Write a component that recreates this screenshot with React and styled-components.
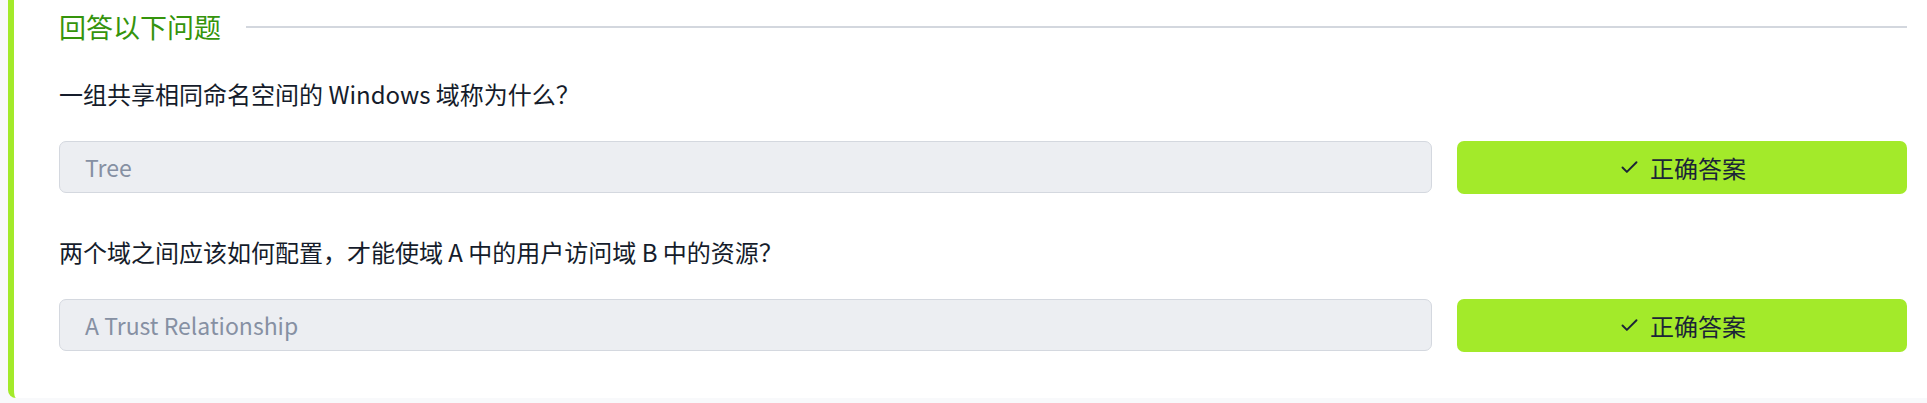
import React from 'react'
import styled, { createGlobalStyle } from 'styled-components'
import { Check } from 'lucide-react'

const GlobalStyle = createGlobalStyle`
  html, body {
    margin: 0;
    padding: 0;
    background: #f8f9fb;
  }
  body {
    font-family: "Noto Sans CJK SC", "Noto Sans", sans-serif;
  }
`

const Page = styled.div`
  padding: 0 0 6px 8px;
`

const Card = styled.section`
  background: #ffffff;
  border-left: 6px solid #a3ea2a;
  border-radius: 0 0 0 8px;
  padding: 7px 20px 46px 45px;
`

const Heading = styled.div`
  display: flex;
  align-items: center;
  gap: 25px;
  height: 40px;
`

const HeadingText = styled.h2`
  margin: 0;
  font-size: 27px;
  line-height: 40px;
  font-weight: 400;
  color: #35940c;
  white-space: nowrap;
`

const HeadingLine = styled.div`
  flex: 1;
  height: 2px;
  background: #d3d7de;
`

const QuestionList = styled.div`
  display: flex;
  flex-direction: column;
  gap: 40px;
  margin-top: 29px;
`

const Question = styled.div`
  display: flex;
  flex-direction: column;
  gap: 29px;
`

const QuestionText = styled.p`
  margin: 0;
  font-size: 24px;
  line-height: 36px;
  color: #151c2b;
`

const AnswerRow = styled.div`
  display: grid;
  grid-template-columns: 1fr 450px;
  gap: 25px;
`

const AnswerBox = styled.div`
  box-sizing: border-box;
  height: 52px;
  display: flex;
  align-items: center;
  padding: 0 25px;
  background: #eceef2;
  border: 1px solid #d4d8df;
  border-radius: 7px;
  font-size: 23px;
  color: #8690a3;
`

const CorrectButton = styled.button`
  box-sizing: border-box;
  height: 53px;
  display: flex;
  align-items: center;
  justify-content: center;
  gap: 10px;
  border: none;
  border-radius: 7px;
  background: #a3ea2a;
  color: #1b2437;
  font-family: inherit;
  font-size: 24px;
  padding: 0 0 0 1px;
  cursor: pointer;
`

const questions = [
  {
    text: '一组共享相同命名空间的 Windows 域称为什么？',
    answer: 'Tree',
  },
  {
    text: '两个域之间应该如何配置，才能使域 A 中的用户访问域 B 中的资源？',
    answer: 'A Trust Relationship',
  },
]

export default function App() {
  return (
    <Page>
      <GlobalStyle />
      <Card>
        <Heading>
          <HeadingText>回答以下问题</HeadingText>
          <HeadingLine />
        </Heading>
        <QuestionList>
          {questions.map((q) => (
            <Question key={q.answer}>
              <QuestionText>{q.text}</QuestionText>
              <AnswerRow>
                <AnswerBox>{q.answer}</AnswerBox>
                <CorrectButton>
                  <Check size={21} strokeWidth={2.2} />
                  正确答案
                </CorrectButton>
              </AnswerRow>
            </Question>
          ))}
        </QuestionList>
      </Card>
    </Page>
  )
}
